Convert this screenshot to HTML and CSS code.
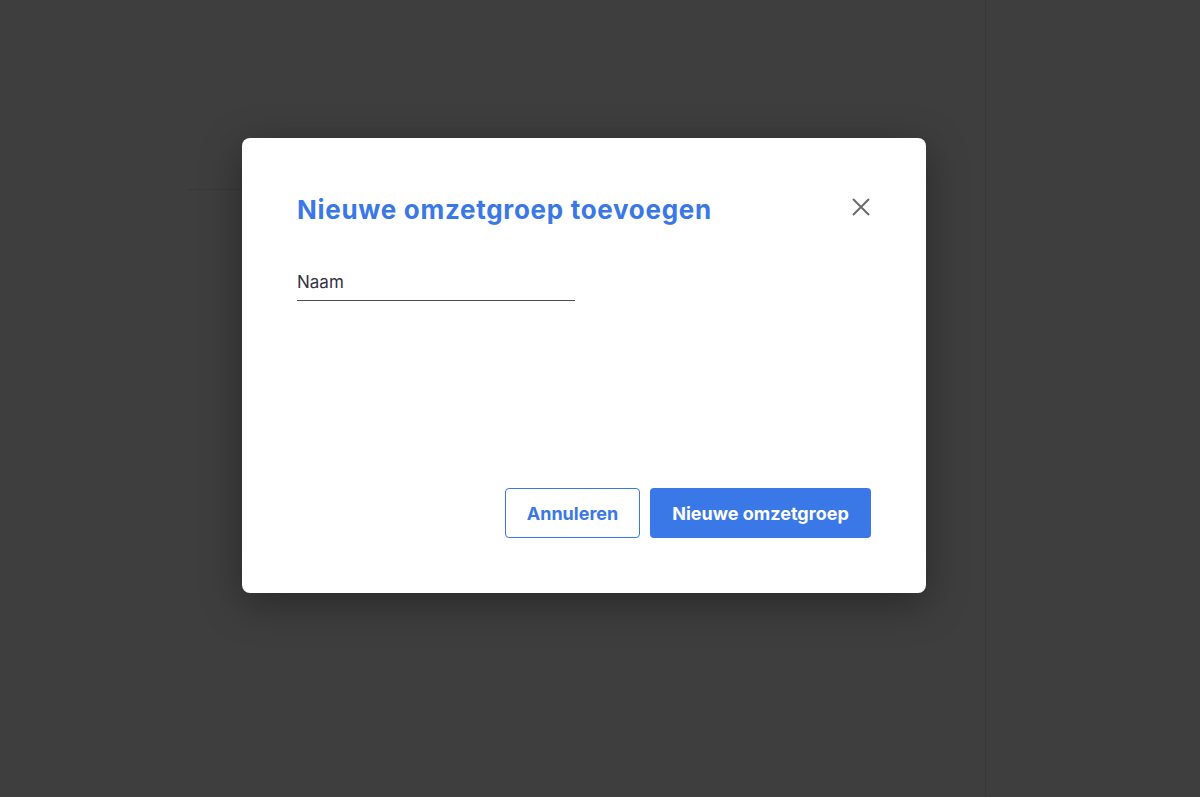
FILE: index.html
```html
<!DOCTYPE html>
<html lang="nl">
<head>
<meta charset="utf-8">
<title>Nieuwe omzetgroep toevoegen</title>
<link rel="stylesheet" href="styles.css">
</head>
<body>
<div class="backdrop">
  <div class="side-line"></div>
  <div class="faint-line"></div>
  <div class="dialog" role="dialog">
    <div class="dialog-head">
      <h2 class="dialog-title">Nieuwe omzetgroep toevoegen</h2>
      <button class="close" aria-label="Sluiten">
        <svg width="18" height="18" viewBox="0 0 18 18"><path d="M1 1 L17 17 M17 1 L1 17" stroke="#6b6b6b" stroke-width="2" fill="none"/></svg>
      </button>
    </div>
    <div class="field">
      <label class="field-label">Naam</label>
    </div>
    <div class="actions">
      <button class="btn btn-outline">Annuleren</button>
      <button class="btn btn-primary">Nieuwe omzetgroep</button>
    </div>
  </div>
</div>
</body>
</html>
```

FILE: styles.css
```css
html, body {
  margin: 0;
  height: 100%;
  background: #3e3e3e;
  font-family: Inter, "Noto Sans", sans-serif;
}
.backdrop {
  position: relative;
  height: 797px;
  overflow: hidden;
  padding-top: 138px;
  padding-left: 242px;
  box-sizing: border-box;
}
.side-line {
  position: absolute;
  left: 985px;
  top: 0;
  bottom: 0;
  width: 1px;
  background: #383838;
}
.faint-line {
  position: absolute;
  left: 188px;
  top: 189px;
  width: 54px;
  height: 1px;
  background: #383838;
}
.dialog {
  position: relative;
  width: 684px;
  height: 455px;
  box-sizing: border-box;
  background: #fff;
  border-radius: 8px;
  padding: 55px 55px 55px 55px;
  display: flex;
  flex-direction: column;
  box-shadow: 0 10px 40px rgba(0,0,0,0.35);
}
.dialog-head {
  display: flex;
  justify-content: space-between;
  align-items: flex-start;
}
.dialog-title {
  margin: 0;
  font-size: 26px;
  line-height: 34px;
  font-weight: 700;
  color: #3b78e7;
  letter-spacing: 0.7px;
}
.close {
  border: 0;
  background: none;
  padding: 0;
  margin-top: 5px;
  margin-right: 1px;
  width: 18px;
  height: 18px;
  cursor: pointer;
}
.close svg { display: block; }
.field {
  margin-top: 44px;
  width: 278px;
  border-bottom: 1px solid #4a4a55;
  padding-bottom: 7px;
}
.field-label {
  display: block;
  font-size: 17px;
  line-height: 22px;
  color: #33333f;
}
.actions {
  margin-top: auto;
  display: flex;
  justify-content: flex-end;
  gap: 10px;
}
.btn {
  height: 50px;
  border-radius: 4px;
  font-family: Inter, "Noto Sans", sans-serif;
  font-size: 18px;
  font-weight: 700;
  box-sizing: border-box;
  cursor: pointer;
}
.btn-outline {
  width: 135px;
  background: #fff;
  color: #3b78e7;
  border: 1px solid #3b78e7;
}
.btn-primary {
  width: 221px;
  background: #3b78e7;
  color: #fff;
  border: 0;
}
```
